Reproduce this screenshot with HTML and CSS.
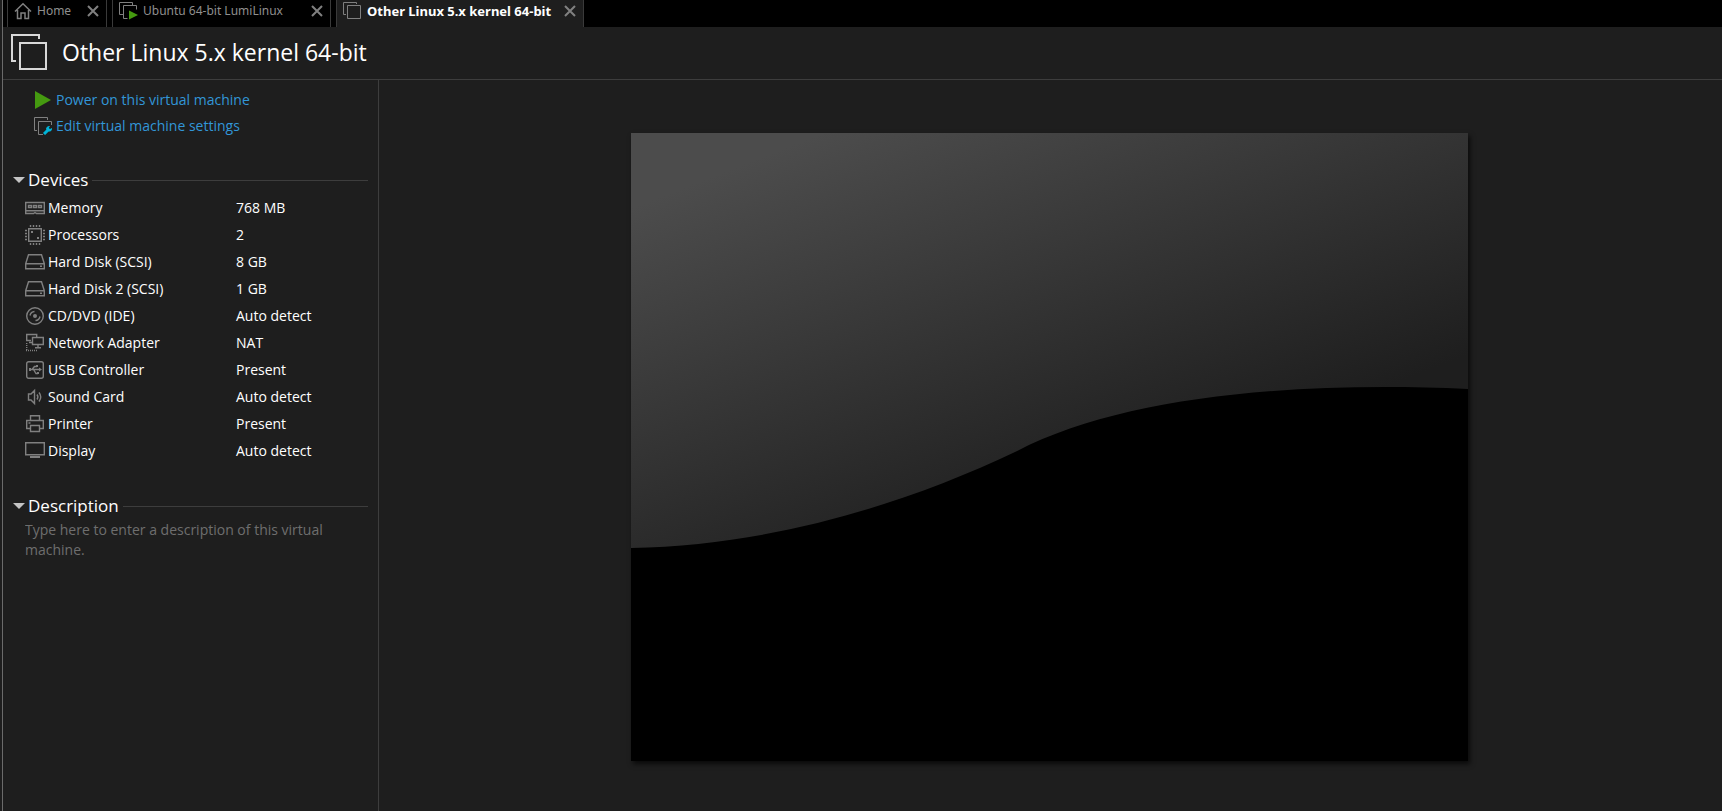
FILE: index.html
```html
<!DOCTYPE html>
<html lang="en">
<head>
<meta charset="utf-8">
<title>Other Linux 5.x kernel 64-bit</title>
<meta name="viewport" content="width=device-width, initial-scale=1">
<link rel="stylesheet" href="styles.css">
</head>
<body>
<div class="window">
  <nav class="tabs" aria-label="Open tabs">
    <div class="tab tab-home">
      <button class="tab-label" type="button">
        <svg class="icon" width="18" height="18" viewBox="0 0 18 18"><path stroke-width="1.500" d="M1 9.500 9 1.700l8 7.800M3.500 8v8.500h3.500v-5.500h4v5.500h3.500V8"/></svg>
        <span>Home</span>
      </button>
      <button class="close" type="button" aria-label="Close Home"><svg class="icon" width="12" height="12" viewBox="0 0 12 12"><path class="heavy" d="M1 1l10 10M11 1 1 11"/></svg></button>
    </div>
    <div class="tab tab-ubuntu">
      <button class="tab-label" type="button">
        <svg class="icon" width="19" height="19" viewBox="0 0 19 19"><path d="M4 13.500H.5V1.500h13V4M8.500 17.500h-4V4.500h13v4"/><path class="play" d="M10 9.500v9l9-4.500z"/></svg>
        <span>Ubuntu 64-bit LumiLinux</span>
      </button>
      <button class="close" type="button" aria-label="Close Ubuntu 64-bit LumiLinux"><svg class="icon" width="12" height="12" viewBox="0 0 12 12"><path class="heavy" d="M1 1l10 10M11 1 1 11"/></svg></button>
    </div>
    <div class="tab tab-other active">
      <button class="tab-label" type="button">
        <svg class="icon" width="19" height="19" viewBox="0 0 19 19"><path d="M3 13.500H.5V1.500h13V3M4.500 4.500h13v13h-13z"/></svg>
        <span>Other Linux 5.x kernel 64-bit</span>
      </button>
      <button class="close" type="button" aria-label="Close Other Linux 5.x kernel 64-bit"><svg class="icon" width="12" height="12" viewBox="0 0 12 12"><path class="heavy" d="M1 1l10 10M11 1 1 11"/></svg></button>
    </div>
  </nav>

  <header class="header">
    <svg class="vm-icon" width="36" height="36" viewBox="0 0 36 36"><path d="M5 27H1V1h27v4M9 9h26v26H9z"/></svg>
    <h1 class="title">Other Linux 5.x kernel 64-bit</h1>
  </header>

  <div class="body">
    <aside class="sidebar">
      <div class="actions">
        <a class="action" href="#power"><svg class="icon" width="18" height="18" viewBox="0 0 18 18"><path class="play" d="M1 0v18l16-9z"/></svg><span>Power on this virtual machine</span></a>
        <a class="action" href="#settings"><svg class="icon" width="18" height="18" viewBox="0 0 18 18"><path d="M3 13.500H.5V.5h13V3M9 17.500H4.500V4.500h13V8"/><path class="wrench" d="M10 17l5-5"/><path class="wrench-head" d="M12 12c0-2 2-3.500 4-3l-1.200 2 1.200 1 2-1c.5 2-1.500 4-3.500 3.500z"/></svg><span>Edit virtual machine settings</span></a>
      </div>

      <section>
        <h2 class="section-head"><button class="toggle" type="button"><svg width="12" height="6" viewBox="0 0 12 6"><path class="arrow" d="M0 0h12L6 6z"/></svg><span>Devices</span></button></h2>
        <table class="devices">
          <tbody>
          <tr><th scope="row"><span class="device"><svg class="icon" width="20" height="20" viewBox="0 0 20 20"><path d="M.7 4.500h18.600v11h-7.800l-1.500-1-1.500 1H.7zM1 12.700h18M3.500 7.500h3v2h-3zM8.500 7.500h3v2h-3zM13.500 7.500h3v2h-3z"/></svg>Memory</span></th><td>768 MB</td></tr>
          <tr><th scope="row"><span class="device"><svg class="icon" width="20" height="20" viewBox="0 0 20 20"><path d="M3.700 3.700h12.600v12.600H3.700z"/><path d="M5.500 0v2M8.500 0v2M11.500 0v2M14.500 0v2M5.500 18v2M8.500 18v2M11.500 18v2M14.500 18v2M0 5.500h2M0 8.500h2M0 11.500h2M0 14.500h2M18 5.500h2M18 8.500h2M18 11.500h2M18 14.500h2"/><path class="fill" d="M6 6h2v2H6zM12 12h2v2h-2z"/></svg>Processors</span></th><td>2</td></tr>
          <tr><th scope="row"><span class="device"><svg class="icon" width="20" height="20" viewBox="0 0 20 20"><path d="M3.500 2.700h13l2.800 9v5H.7v-5zM.7 11.700h18.600M15 14.300h2"/></svg>Hard Disk (SCSI)</span></th><td>8 GB</td></tr>
          <tr><th scope="row"><span class="device"><svg class="icon" width="20" height="20" viewBox="0 0 20 20"><path d="M3.500 2.700h13l2.800 9v5H.7v-5zM.7 11.700h18.600M15 14.300h2"/></svg>Hard Disk 2 (SCSI)</span></th><td>1 GB</td></tr>
          <tr><th scope="row"><span class="device"><svg class="icon" width="20" height="20" viewBox="0 0 20 20"><circle cx="10" cy="10" r="8.300"/><circle class="fill" cx="10" cy="10" r="2"/><path d="M5 9.500a5 5 0 0 1 4.500-4M15 10.500a5 5 0 0 1-4.500 4"/></svg>CD/DVD (IDE)</span></th><td>Auto detect</td></tr>
          <tr><th scope="row"><span class="device"><svg class="icon" width="20" height="20" viewBox="0 0 20 20"><path d="M6 7.500H1.700v-6h10V4M4 9.500h3M7.500 4.500h10.800v7H7.500zM13 12v3M10 14.700h6"/><path class="dots" d="M1.700 10v8M1 17.500h12"/></svg>Network Adapter</span></th><td>NAT</td></tr>
          <tr><th scope="row"><span class="device"><svg class="icon" width="20" height="20" viewBox="0 0 20 20"><rect x="1.700" y="1.700" width="16.600" height="16.600" rx="2"/><path d="M4 9.500h11M7 9.500l2.500-3H12M8.500 9.500l2.500 4h2"/><path class="fill" d="M14 7.500l3 2-3 2zM4 8h2v3H4zM11 5h2v2h-2zM12 12h2v2h-2z"/></svg>USB Controller</span></th><td>Present</td></tr>
          <tr><th scope="row"><span class="device"><svg class="icon" width="20" height="20" viewBox="0 0 20 20"><path d="M3.500 7H6l3.500-3.500v13L6 13H3.500zM12 7.500q1.800 2.500 0 5M14 5.500q3.500 4.500 0 9"/></svg>Sound Card</span></th><td>Auto detect</td></tr>
          <tr><th scope="row"><span class="device"><svg class="icon" width="20" height="20" viewBox="0 0 20 20"><path d="M5.500 6V1.700h9V6M5 14.500H1.700v-8h16.600v8H15M5.500 11.500h9v6h-9zM3.500 9h2"/></svg>Printer</span></th><td>Present</td></tr>
          <tr><th scope="row"><span class="device"><svg class="icon" width="20" height="20" viewBox="0 0 20 20"><path d="M.7 1.700h18.600v12H.7z"/><path class="heavy" d="M5 16h10"/></svg>Display</span></th><td>Auto detect</td></tr>
          </tbody>
        </table>
      </section>

      <section>
        <h2 class="section-head"><button class="toggle" type="button"><svg width="12" height="6" viewBox="0 0 12 6"><path class="arrow" d="M0 0h12L6 6z"/></svg><span>Description</span></button></h2>
        <textarea class="description" rows="3" aria-label="Description" placeholder="Type here to enter a description of this virtual machine."></textarea>
      </section>
    </aside>

    <main class="stage">
      <svg class="screen" viewBox="0 0 837 628" preserveAspectRatio="none" role="img" aria-label="Virtual machine display, powered off">
        <defs>
          <linearGradient id="sheen" gradientUnits="userSpaceOnUse" x1="90" y1="40" x2="252" y2="452">
            <stop offset="0" stop-color="#4c4c4c"/>
            <stop offset="1" stop-color="#1e1e1e"/>
          </linearGradient>
        </defs>
        <path d="M0 0h837v628H0z"/>
        <path fill="url(#sheen)" d="M0 0h837v256C660 248 490 264 386 318 270 373 140 412 0 415z"/>
      </svg>
    </main>
  </div>
</div>
</body>
</html>
```
FILE: styles.css
```css
* {
  box-sizing: border-box;
}

body {
  margin: 0;
  background: #1e1e1e;
  color: #fff;
  font-family: "Open Sans", "Noto Sans", sans-serif;
  font-size: 14px;
}

button {
  padding: 0;
  border: 0;
  background: none;
  color: inherit;
  font: inherit;
}

svg {
  display: block;
  flex: none;
}

.window {
  display: flex;
  flex-direction: column;
  min-height: 100vh;
  border-left: 1px solid #6b6b6b;
  margin-left: 2px;
}

.icon {
  fill: none;
  stroke: #808080;
  stroke-width: 1;
}

.device .icon {
  stroke-width: 1.4;
}

.icon .heavy {
  stroke-width: 2;
}

.icon .fill {
  fill: #808080;
  stroke: none;
}

.icon .play {
  fill: #459a10;
  stroke: none;
}

.icon .dots {
  stroke-dasharray: 1 1;
}

.icon .wrench {
  stroke: #00b4d8;
  stroke-width: 3;
}

.icon .wrench-head {
  fill: #00b4d8;
  stroke: none;
}

.arrow {
  fill: #c4c4c4;
}

.tabs {
  display: flex;
  gap: 5px;
  height: 27px;
  padding-left: 4px;
  background: #000;
}

.tab {
  display: flex;
  align-items: center;
  justify-content: space-between;
  padding: 0 7px 6px 6px;
  border: solid #3a3a3a;
  border-width: 0 1px;
  color: #8f8f8f;
  font-family: "Noto Sans", sans-serif;
  font-size: 12px;
  line-height: 20px;
  white-space: nowrap;
}

.tab-home {
  width: 100px;
}

.tab-ubuntu {
  width: 219px;
}

.tab-other {
  width: 248px;
}

.tab-label {
  display: flex;
  align-items: center;
  gap: 5px;
}

.active {
  background: #1e1e1e;
  color: #fff;
  font-size: 13px;
  font-weight: 700;
}

.header {
  display: flex;
  align-items: center;
  gap: 15px;
  height: 53px;
  padding: 0 8px 2px;
  border-bottom: 1px solid #3d3d3d;
}

.vm-icon {
  fill: none;
  stroke: #d8d8d8;
  stroke-width: 2;
}

.title {
  margin: 0;
  font-size: 23px;
  font-weight: 400;
  line-height: 30px;
}

.body {
  display: flex;
  flex: 1;
}

.sidebar {
  flex: none;
  width: 376px;
  padding: 7px 10px 0;
  border-right: 1px solid #3d3d3d;
}

.actions {
  display: flex;
  flex-direction: column;
  align-items: flex-start;
  padding: 0 0 27px 21px;
}

.action {
  display: flex;
  align-items: center;
  gap: 4px;
  color: #3296d8;
  line-height: 26px;
  text-decoration: none;
}

.section-head {
  display: flex;
  align-items: center;
  gap: 4px;
  margin: 0;
  font-size: 17px;
  font-weight: 400;
  line-height: 28px;
}

.section-head::after {
  flex: 1;
  height: 1px;
  background: #3d3d3d;
  content: "";
}

.toggle {
  display: flex;
  align-items: center;
  gap: 3px;
}

.devices {
  margin: 0 0 28px 12px;
  border-collapse: collapse;
}

.devices th,
.devices td {
  height: 27px;
  padding: 0;
  font-weight: 400;
  text-align: left;
}

.devices th {
  width: 211px;
}

.device {
  display: flex;
  align-items: center;
  gap: 3px;
}

.description {
  display: block;
  width: 320px;
  margin-left: 12px;
  padding: 0;
  border: 0;
  background: none;
  color: #fff;
  font: inherit;
  line-height: 20px;
  resize: none;
}

.description::placeholder {
  color: #6e6e6e;
}

.stage {
  display: flex;
  flex: 1;
  align-items: center;
  justify-content: center;
  min-width: 0;
  padding: 3px 2px 0 0;
}

.screen {
  height: calc(100vh - 183px);
  max-width: 100%;
  aspect-ratio: 4 / 3;
  box-shadow: 2px 3px 5px rgba(0, 0, 0, 0.7);
}
```
